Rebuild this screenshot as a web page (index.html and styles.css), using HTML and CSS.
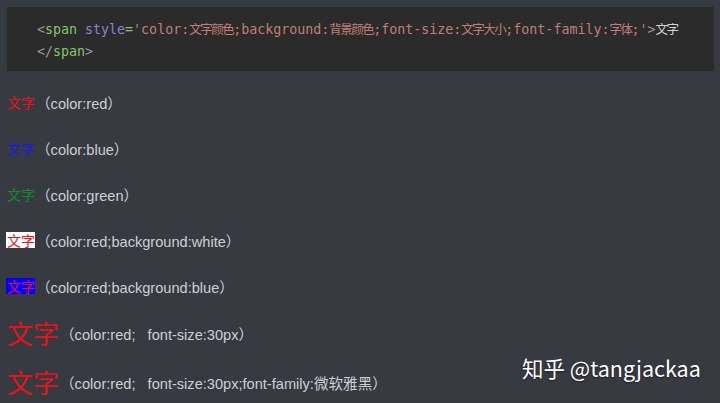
FILE: index.html
```html
<!DOCTYPE html>
<html>
<head>
<meta charset="utf-8">
<link rel="stylesheet" href="styles.css">
</head>
<body>
<div class="code">
  <div class="line"><span class="p">&lt;</span><span class="tag">span</span> <span class="attr">style</span><span class="eq">=</span><span class="str">'color:<span class="cj">文字颜色</span>;background:<span class="cj">背景颜色</span>;font-size:<span class="cj">文字大小</span>;font-family:<span class="cj">字体</span>;'</span><span class="p">&gt;</span><span class="txt cj">文字</span></div>
  <div class="line"><span class="p">&lt;/</span><span class="tag">span</span><span class="p">&gt;</span></div>
</div>
<div class="rows">
  <div class="row"><span class="s red">文字</span><span class="desc">（color:red）</span></div>
  <div class="row"><span class="s blue">文字</span><span class="desc">（color:blue）</span></div>
  <div class="row"><span class="s green">文字</span><span class="desc">（color:green）</span></div>
  <div class="row"><span class="s red bgw">文字</span><span class="desc">（color:red;background:white）</span></div>
  <div class="row"><span class="s red bgb">文字</span><span class="desc">（color:red;background:blue）</span></div>
  <div class="row big"><span class="l red">文字</span><span class="desc">（color:red;&nbsp;&nbsp;&nbsp;font-size:30px）</span></div>
  <div class="row big2"><span class="l red">文字</span><span class="desc">（color:red;&nbsp;&nbsp;&nbsp;font-size:30px;font-family:微软雅黑）</span></div>
</div>
<div class="mark">知乎 @tangjackaa</div>
</body>
</html>
```
FILE: styles.css
```css
html, body { margin: 0; padding: 0; }
body {
  background: #373a40;
  width: 720px;
  height: 403px;
  overflow: hidden;
  position: relative;
  padding: 7px 6px 0 7px;
  box-sizing: border-box;
  font-family: "Liberation Sans", "Noto Sans CJK SC", sans-serif;
}
.code {
  background: #2b2b2b;
  height: 64px;
  box-sizing: border-box;
  padding: 10px 0 0 30px;
  font-family: "DejaVu Sans Mono", "Noto Sans CJK SC", monospace;
  font-size: 13.3px;
  line-height: 23px;
  color: #c47c7a;
}
.line { white-space: nowrap; height: 23px; }
.cj { font-family: "Noto Sans CJK SC", sans-serif; font-size: 12.5px; letter-spacing: -1.5px; }
.p { color: #9b9b9b; }
.tag { color: #86c46c; }
.attr { color: #8686cf; }
.eq { color: #86c46c; }
.str { color: #c47c7a; }
.txt { color: #d4d4d4; }
.rows { margin-top: 8px; display: flex; flex-direction: column; }
.row {
  height: 46px;
  display: flex;
  align-items: center;
  white-space: nowrap;
}
.row.big { height: 48px; }
.row.big2 { height: 50px; }
.s {
  font-family: "Noto Sans CJK SC", serif;
  font-size: 14px;
  line-height: 16px;
  margin-right: 1px;
}
.l {
  font-family: "Noto Sans CJK SC", sans-serif;
  font-size: 26px;
  line-height: 30px;
  margin-right: 1px;
}
.red { color: #e0141c; }
.blue { color: #1a1ae6; }
.green { color: #148a2a; }
.bgw { background: #ffffff; margin-left: -1px; padding-left: 1px; }
.bgb { background: #0000ff; margin-left: -1px; padding-left: 1px; }
.desc {
  color: #cdcfd3;
  font-size: 14.6px;
  font-family: "Liberation Sans", "Noto Sans CJK SC", sans-serif;
}
.mark {
  position: absolute;
  left: 522px;
  top: 354px;
  color: #ffffff;
  font-size: 21.5px;
  line-height: 28px;
  font-family: "Noto Sans CJK SC", "Noto Sans", sans-serif;
  text-shadow: 0 1px 2px rgba(0,0,0,0.5);
  white-space: nowrap;
}
```
